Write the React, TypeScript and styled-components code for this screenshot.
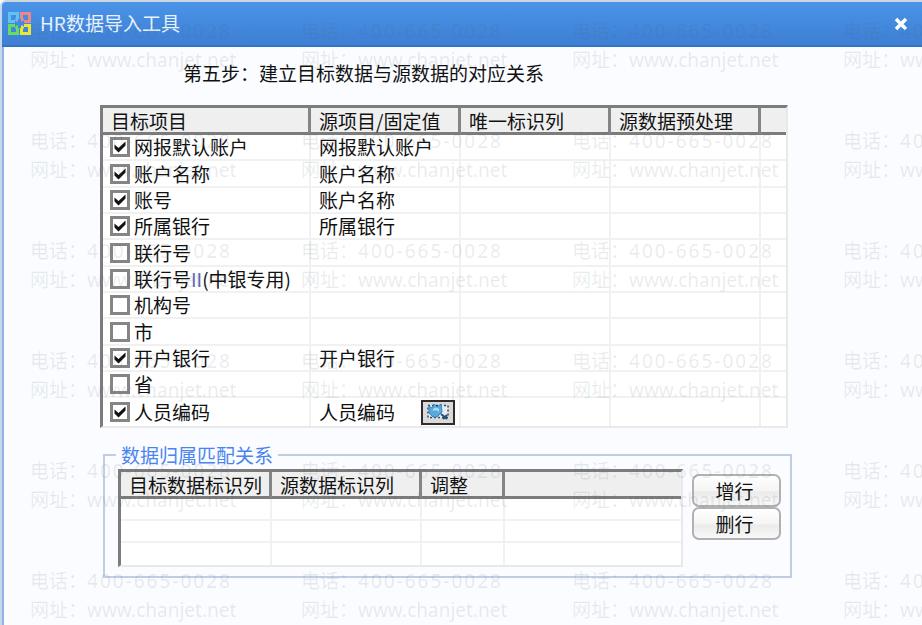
import React from "react";
import styled, { createGlobalStyle } from "styled-components";

const GlobalStyle = createGlobalStyle`
  *, *::before, *::after { box-sizing: border-box; }
  body {
    margin: 0;
    background: #fafcff;
    color: #111;
    font: 19px/24px "Noto Sans CJK SC", sans-serif;
  }
`;

const Window = styled.div`
  position: relative;
  min-height: 100vh;
  overflow: hidden;
  border-top: 2px solid #cdd5de;
  border-left: 2px solid #c3d8ee;
  border-top-left-radius: 6px;
  background: #fafcff;
`;

const TitleBar = styled.header`
  display: flex;
  align-items: center;
  gap: 8px;
  height: 45px;
  padding: 0 13px 0 5px;
  border-bottom: 2px solid #3474c6;
  background: linear-gradient(#4a94e8, #3d7fd3);
  color: #e8f3ff;
`;

const Title = styled.h1`
  flex: 1;
  margin: 0;
  padding-bottom: 2px;
  font-size: 19px;
  font-weight: 400;
`;

const CloseButton = styled.button`
  display: flex;
  padding: 0;
  border: 0;
  background: none;
  cursor: pointer;
`;

const Content = styled.main`
  min-height: calc(100vh - 47px);
  padding: 14px 134px 20px 96px;
  border-left: 2px solid #8fb4e0;
`;

const StepHeading = styled.h2`
  margin: 0 0 20px 83px;
  font-size: 19px;
  font-weight: 400;
  white-space: nowrap;
`;

const GridFrame = styled.div`
  flex: 1;
  min-width: 0;
  border: 2px solid #e9e9e9;
  border-top: 3px solid #7c7c7c;
  border-left: 3px solid #7c7c7c;
  background: #fff;
`;

const DataGrid = styled.table<{ $height: number }>`
  width: 100%;
  height: ${(p) => p.$height}px;
  table-layout: fixed;
  border-collapse: separate;
  border-spacing: 0;
`;

const HeadCell = styled.th`
  height: 27px;
  padding: 2px 0 0 8px;
  border-right: 3px solid #858585;
  border-bottom: 3px solid #7c7c7c;
  background: #efefef;
  font-weight: 400;
  line-height: 22px;
  text-align: left;
  white-space: nowrap;

  &:last-child { border-right: 0; }
`;

const Cell = styled.td`
  height: 22px;
  padding: 0 0 0 8px;
  border-right: 2px solid #f1f1f1;
  border-bottom: 2px solid #f1f1f1;
  line-height: 22px;
  white-space: nowrap;

  &:first-child { padding-left: 7px; }
  &:last-child { border-right: 0; }
  tr:last-child > & { border-bottom: 0; }
`;

const CheckLabel = styled.label`
  display: flex;
  align-items: center;
  gap: 4px;
`;

const CheckStack = styled.span`
  display: grid;
  place-items: center;

  > * { grid-area: 1 / 1; }
  > svg { pointer-events: none; visibility: hidden; }
  > input:checked + svg { visibility: visible; }
`;

const CheckInput = styled.input`
  appearance: none;
  width: 20px;
  height: 20px;
  margin: 0;
  border: 3px solid #858585;
  background: #fff;
`;

const Numeral = styled.span`
  color: #6069b0;
`;

const SourceCell = styled.div`
  display: flex;
  align-items: center;
  justify-content: space-between;
  padding-right: 4px;
`;

const LookupButton = styled.button`
  display: flex;
  align-items: center;
  justify-content: center;
  width: 34px;
  height: 25px;
  padding: 0;
  border: 2px solid #332b29;
  background: #d9dadc;
`;

const MatchGroup = styled.fieldset`
  min-width: 0;
  margin: 17px -4px 0 3px;
  padding: 4px 9px 9px 13px;
  border: 2px solid #bfcfe1;
`;

const GroupTitle = styled.legend`
  padding: 0 5px;
  margin-left: -2px;
  color: #4b84ef;
  line-height: 20px;
`;

const GroupRow = styled.div`
  display: flex;
  gap: 9px;
`;

const ButtonColumn = styled.div`
  display: flex;
  flex-direction: column;
  padding-top: 5px;
`;

const ActionButton = styled.button`
  width: 89px;
  height: 33px;
  padding: 0 4px 0 0;
  border: 2px solid #b1b1b1;
  border-radius: 7px;
  background: linear-gradient(#fff, #f5f5f5 50%, #ebebeb 55%, #f8f8f8);
  color: #111;
  font: inherit;
`;

const WatermarkLayer = styled.div`
  position: absolute;
  inset: 15px 0 0 28px;
  display: grid;
  grid-template-columns: repeat(4, 271px);
  grid-auto-rows: 110px;
  overflow: hidden;
  pointer-events: none;
  color: rgba(80, 90, 110, 0.12);
  font-family: "Noto Sans", "Noto Sans CJK SC", sans-serif;
  line-height: 29px;
  white-space: nowrap;
`;

const PhoneNumber = styled.span`
  letter-spacing: 2px;
`;

const AppLogo = () => (
  <svg width="25" height="25" viewBox="0 0 25 25" fill="none" strokeWidth="3" aria-hidden="true">
    <path d="M10.500 8V2.500H2.500V10.500H8" stroke="#62c3f2" />
    <path d="M14.500 8V2.500H22.500V10.500H17" stroke="#ee8588" />
    <path d="M10.500 17V22.500H2.500V14.500H8" stroke="#67dc5d" />
    <path d="M14.500 17V22.500H22.500V14.500H17" stroke="#eee634" />
    <g strokeWidth="2">
      <path d="M8 8.500h2v2" stroke="#62c3f2" />
      <path d="M17 8.500h-2v2" stroke="#ee8588" />
      <path d="M8 16.500h2v-2" stroke="#67dc5d" />
      <path d="M17 16.500h-2v-2" stroke="#eee634" />
    </g>
  </svg>
);

const CheckMark = () => (
  <svg width="14" height="14" viewBox="0 0 14 14" aria-hidden="true">
    <path d="M1.500 4.500L5.500 8L12.500 1.500V5.500L5.500 12.500L1.500 8.500Z" fill="#111" />
  </svg>
);

const LookupIcon = () => (
  <svg width="26" height="18" viewBox="0 0 26 18" aria-hidden="true">
    <rect x="3" y="2.500" width="20" height="12" fill="#e4edf3" stroke="#3b4650" strokeWidth="1.500" strokeDasharray="2 2" />
    <path d="M4 3L7 5L9 1L12 4L16 1L17 9L12 14H8L4 10Z" fill="#59a9dd" stroke="#3184c3" />
    <path d="M8 6q3-3 6 0v3q-2-3-6-1z" fill="#a9dcf6" />
    <path d="M16 11l6 5M18 16l4-4" stroke="#294d75" strokeWidth="2" />
  </svg>
);

type Mapping = { target: React.ReactNode; source?: string; checked?: boolean; lookup?: boolean };

const mappings: Mapping[] = [
  { target: "网报默认账户", source: "网报默认账户", checked: true },
  { target: "账户名称", source: "账户名称", checked: true },
  { target: "账号", source: "账户名称", checked: true },
  { target: "所属银行", source: "所属银行", checked: true },
  { target: "联行号" },
  { target: <>联行号<Numeral>II</Numeral>(中银专用)</> },
  { target: "机构号" },
  { target: "市" },
  { target: "开户银行", source: "开户银行", checked: true },
  { target: "省" },
  { target: "人员编码", source: "人员编码", checked: true, lookup: true },
];

const Columns = ({ widths }: { widths: number[] }) => (
  <colgroup>
    {widths.map((w, i) => <col key={i} width={w} />)}
    <col />
  </colgroup>
);

const Head = ({ labels }: { labels: string[] }) => (
  <thead>
    <tr>{labels.map((label, i) => <HeadCell key={i} scope="col">{label}</HeadCell>)}</tr>
  </thead>
);

export default function App() {
  return (
    <>
      <GlobalStyle />
      <Window>
        <TitleBar>
          <AppLogo />
          <Title>HR数据导入工具</Title>
          <CloseButton type="button" aria-label="关闭">
            <svg width="16" height="16" viewBox="0 0 16 16" aria-hidden="true">
              <path d="M3 3L13 13M13 3L3 13" stroke="#fff" strokeWidth="3.500" />
            </svg>
          </CloseButton>
        </TitleBar>

        <Content>
          <StepHeading>第五步：建立目标数据与源数据的对应关系</StepHeading>

          <GridFrame>
            <DataGrid $height={318}>
              <Columns widths={[208, 150, 150, 150]} />
              <Head labels={["目标项目", "源项目/固定值", "唯一标识列", "源数据预处理", ""]} />
              <tbody>
                {mappings.map((m, i) => (
                  <tr key={i}>
                    <Cell>
                      <CheckLabel>
                        <CheckStack>
                          <CheckInput type="checkbox" defaultChecked={m.checked} />
                          <CheckMark />
                        </CheckStack>
                        <span>{m.target}</span>
                      </CheckLabel>
                    </Cell>
                    <Cell>
                      <SourceCell>
                        {m.source}
                        {m.lookup && (
                          <LookupButton type="button" aria-label="查找">
                            <LookupIcon />
                          </LookupButton>
                        )}
                      </SourceCell>
                    </Cell>
                    <Cell />
                    <Cell />
                    <Cell />
                  </tr>
                ))}
              </tbody>
            </DataGrid>
          </GridFrame>

          <MatchGroup>
            <GroupTitle>数据归属匹配关系</GroupTitle>
            <GroupRow>
              <GridFrame>
                <DataGrid $height={93}>
                  <Columns widths={[151, 150, 83]} />
                  <Head labels={["目标数据标识列", "源数据标识列", "调整", ""]} />
                  <tbody>
                    {[0, 1, 2].map((r) => (
                      <tr key={r}><Cell /><Cell /><Cell /><Cell /></tr>
                    ))}
                  </tbody>
                </DataGrid>
              </GridFrame>
              <ButtonColumn>
                <ActionButton type="button">增行</ActionButton>
                <ActionButton type="button">删行</ActionButton>
              </ButtonColumn>
            </GroupRow>
          </MatchGroup>
        </Content>

        <WatermarkLayer aria-hidden="true">
          {Array.from({ length: 24 }, (_, i) => (
            <div key={i}>
              <div>电话：<PhoneNumber>400-665-0028</PhoneNumber></div>
              <div>网址：www.chanjet.net</div>
            </div>
          ))}
        </WatermarkLayer>
      </Window>
    </>
  );
}
